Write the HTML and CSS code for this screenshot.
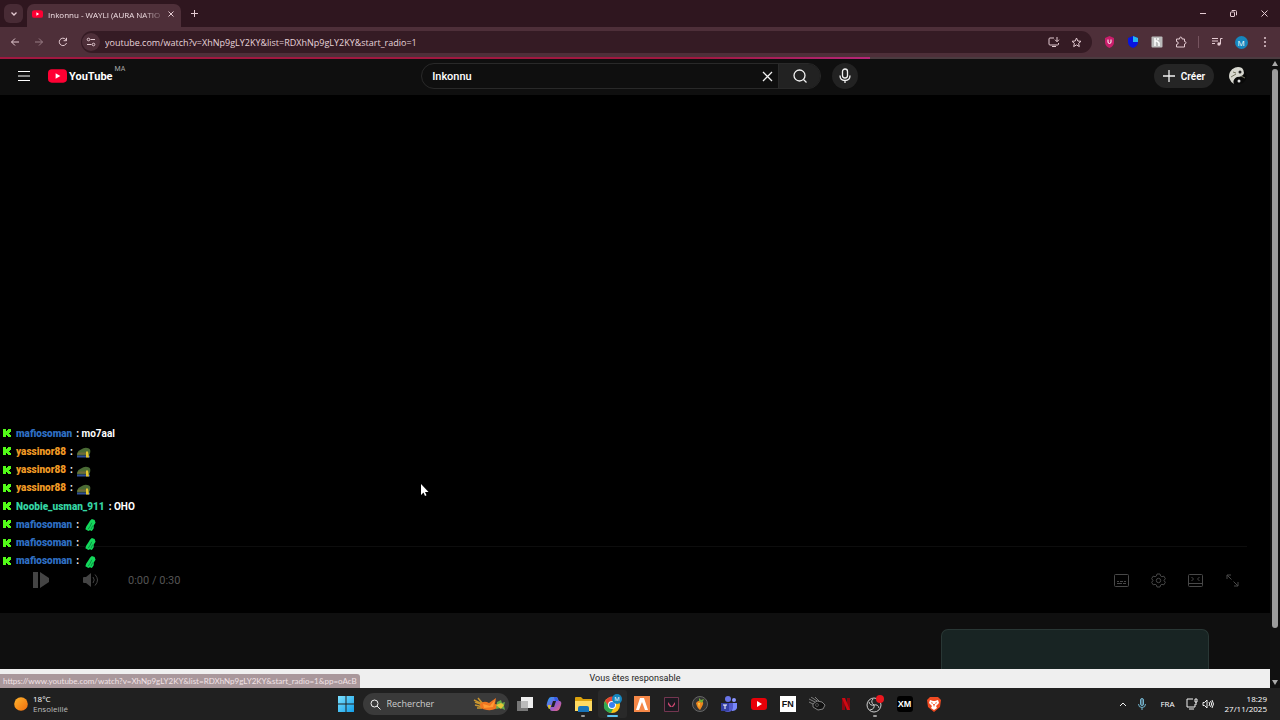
FILE: index.html
```html
<!DOCTYPE html>
<html lang="fr">
<head>
    <meta charset="UTF-8">
    <meta name="viewport" content="width=device-width, initial-scale=1.0">
    <title>Inkonnu - WAYLI (AURA NATION)</title>
    <link rel="stylesheet" href="styles.css">
</head>
<body>
    <!-- Shared icons -->
    <svg class="sprite" aria-hidden="true">
        <symbol id="kick" viewBox="0 0 8 8"><path fill="#53fc18" d="M0 0h3v2h1V1h1V0h3v3H7v1H6v1h1v1h1v2H5V7H4V6H3v2H0z"/></symbol>
        <symbol id="cap" viewBox="0 0 14 12"><path fill="#4a6b35" d="M0 7Q1 4 4 3 8 0 12 2q2 1 1 5l-1 2H0z"/><path fill="#6f6a3a" d="M1 6h8v2H1z"/><path fill="#2f4f96" d="M0 9h13v2H0z"/><path fill="#e5c52f" d="M9 5h2l1 6H9z"/></symbol>
        <symbol id="frog" viewBox="0 0 12 14"><path fill="#14d95c" d="M6 2l2-2 3 1 1 3-2 3v3l-2 3-2-1-2 1-1-1-2-1 1-3 2-3z"/><path stroke="#0a8a42" fill="none" d="M8 4L6 8l-2 3M9 7l-2 4"/></symbol>
        <symbol id="yt" viewBox="0 0 20 14"><rect width="20" height="14" rx="4" fill="#f03"/><path fill="#fff" d="M8 4l5 3-5 3z"/></symbol>
    </svg>

    <!-- Browser tabs -->
    <header class="tabstrip">
        <button class="tab-search" aria-label="Rechercher dans les onglets"><svg width="8" height="8" viewBox="0 0 8 8"><path class="line" stroke-width="1.300" d="M1.500 2.500L4 5l2.500-2.500"/></svg></button>
        <div class="tab">
            <svg width="11" height="8"><use href="#yt"/></svg>
            <span class="tab-title">Inkonnu - WAYLI (AURA NATIO</span>
            <button class="tab-close" aria-label="Fermer l'onglet"><svg width="8" height="8" viewBox="0 0 8 8"><path class="line" d="M1.500 1.500l5 5m0-5l-5 5"/></svg></button>
        </div>
        <button class="new-tab" aria-label="Nouvel onglet"><svg width="9" height="9" viewBox="0 0 9 9"><path class="line" d="M4.500 1v7M1 4.500h7"/></svg></button>
        <div class="window-buttons">
            <button aria-label="Réduire"><svg width="8" height="8" viewBox="0 0 8 8"><path class="line" d="M1 3.500h6"/></svg></button>
            <button aria-label="Restaurer"><svg width="9" height="9" viewBox="0 0 9 9"><path class="line" d="M3 2V1.500h3.500q1 0 1 1V6H7M1.500 3.500q0-.5.5-.5h3q.5 0 .5.5v3.500q0 .5-.5.500H2q-.5 0-.5-.5z"/></svg></button>
            <button aria-label="Fermer"><svg width="9" height="9" viewBox="0 0 9 9"><path class="line" d="M1.500 1.500l6 6m0-6l-6 6"/></svg></button>
        </div>
    </header>

    <nav class="toolbar">
        <div class="tool-group">
            <button aria-label="Retour"><svg width="10" height="10" viewBox="0 0 10 10"><path class="line" d="M9 5H1.500M5 1.500L1.500 5 5 8.500"/></svg></button>
            <button class="dim" aria-label="Avancer"><svg width="10" height="10" viewBox="0 0 10 10"><path class="line" d="M1 5h7.500M5 1.500L8.500 5 5 8.500"/></svg></button>
            <button aria-label="Actualiser"><svg width="10" height="10" viewBox="0 0 10 10"><path class="line" d="M8.500 6A3.700 3.700 0 1 1 7.600 2.300L8.500 3.500M8.500.8v2.900H5.600"/></svg></button>
        </div>
        <div class="omnibox">
            <button class="site-info" aria-label="Informations sur le site"><svg width="10" height="10" viewBox="0 0 10 10"><path class="line" d="M4.500 2.500H9M1 7.500h4.500"/><circle class="line" cx="2.500" cy="2.500" r="1.300"/><circle class="line" cx="7.500" cy="7.500" r="1.300"/></svg></button>
            <input class="url" type="text" aria-label="Adresse" value="youtube.com/watch?v=XhNp9gLY2KY&amp;list=RDXhNp9gLY2KY&amp;start_radio=1">
            <button aria-label="Installer"><svg width="12" height="12" viewBox="0 0 12 12"><path class="line" d="M6 2H2q-1 0-1 1v5q0 1 1 1h7.500q1 0 1-1V7M4 10.500h4M9 1v4.500M7 3.700l2 2 2-2"/></svg></button>
            <button aria-label="Ajouter aux favoris"><svg width="11" height="11" viewBox="0 0 11 11"><path class="line" d="M5.500 1l1.300 3 3.200.3-2.400 2.100.7 3.200-2.800-1.700-2.800 1.700.7-3.200L1 4.300 4.200 4z"/></svg></button>
        </div>
        <div class="tool-group">
            <button aria-label="uBlock"><svg width="11" height="12" viewBox="0 0 11 12"><path fill="#c91e6b" d="M5.500 0L10 2v4q0 4-4.500 6Q1 10 1 6V2z"/><path stroke="#fff" fill="none" d="M4 3.500V6q0 1.500 1.500 1.500T7 6V3.500"/></svg></button>
            <button aria-label="Protection"><svg width="12" height="12" viewBox="0 0 12 12"><path fill="#0715df" d="M1 2l5-2 5 2v4q0 4-5 6-5-2-5-6z"/><path fill="#24b5f0" d="M6 0l5 2v4H6z"/></svg></button>
            <button aria-label="Extension"><svg width="12" height="12" viewBox="0 0 12 12"><rect width="11" height="11" x=".5" y=".5" fill="#bbb" rx="1"/><path stroke="#fff" fill="none" stroke-width="1.500" d="M4 2v8M8 10V7L6 5H4M7 2v2"/></svg></button>
            <button aria-label="Extensions"><svg width="12" height="12" viewBox="0 0 12 12"><path class="line" d="M1.500 3h3q0-2 1.300-2t1.300 2h2.400v2.500q1.500 0 1.500 1.200T9.500 8v3h-8V8.500q1.700 0 1.700-1.500T1.500 5.500z"/></svg></button>
            <span class="separator"></span>
            <button aria-label="Médias"><svg width="12" height="10" viewBox="0 0 12 10"><path class="line" d="M1 1.500h6M1 4h6M1 6.500h3M11.500 1.500H9.500v5.500"/><circle cx="8" cy="7" r="1.700" fill="#e4cbd2"/></svg></button>
            <button aria-label="Profil"><span class="profile">M</span></button>
            <button aria-label="Menu"><svg width="4" height="12" viewBox="0 0 4 12"><g fill="#e4cbd2"><circle cx="2" cy="2" r="1"/><circle cx="2" cy="6" r="1"/><circle cx="2" cy="10" r="1"/></g></svg></button>
        </div>
    </nav>
    <div class="loading"><div class="loading-bar"></div></div>

    <!-- Web page -->
    <div class="viewport">
        <main class="page">
            <div class="masthead">
                <div class="brand">
                    <button aria-label="Guide"><svg width="12" height="12" viewBox="0 0 12 12"><path stroke="#fff" d="M0 1.500h12M0 6h12M0 10.500h12"/></svg></button>
                    <a class="logo" href="#"><svg width="19" height="14"><use href="#yt"/></svg><span>YouTube</span><sup>MA</sup></a>
                </div>
                <form class="search">
                    <div class="search-box">
                        <input type="text" aria-label="Rechercher" value="Inkonnu">
                        <button type="button" class="clear" aria-label="Effacer"><svg width="11" height="11" viewBox="0 0 11 11"><path class="white-line" d="M1 1l9 9m0-9l-9 9"/></svg></button>
                        <button type="button" class="search-submit" aria-label="Lancer la recherche"><svg width="14" height="14" viewBox="0 0 14 14"><circle class="white-line" cx="6.500" cy="6.500" r="5.500"/><path class="white-line" d="M10.500 10.500L13.500 13.500"/></svg></button>
                    </div>
                    <button type="button" class="mic" aria-label="Recherche vocale"><svg width="12" height="16" viewBox="0 0 12 16"><rect class="white-line" x="3.500" y="1" width="5" height="9" rx="2.500"/><path class="white-line" d="M1 7.500q0 5 5 5t5-5M6 12.500V15"/></svg></button>
                </form>
                <div class="account">
                    <button class="create"><svg width="12" height="12" viewBox="0 0 12 12"><path class="white-line" d="M6 0v12M0 6h12"/></svg>Créer</button>
                    <button aria-label="Compte"><svg width="18" height="18" viewBox="0 0 18 18"><circle cx="9" cy="9" r="8.500" fill="#090909"/><path fill="#d8d8d0" d="M13 1A8.500 8.500 0 0 0 5 17q-2-4 3-7 6 0 7-4 0-3-2-5z"/><circle cx="11" cy="5" r="1.500" fill="#222"/><circle cx="10" cy="14" r="1.500" fill="#ddd"/><path stroke="#777762" d="M2 10l5-3M12 9l4 2M4 5l3 1"/></svg></button>
                </div>
            </div>

            <section class="player">
                <ul class="chat">
                    <li><svg class="badge"><use href="#kick"/></svg><b class="blue">mafiosoman</b><span>: mo7aal</span></li>
                    <li><svg class="badge"><use href="#kick"/></svg><b class="orange">yassinor88</b><span>:</span><svg class="emote"><use href="#cap"/></svg></li>
                    <li><svg class="badge"><use href="#kick"/></svg><b class="orange">yassinor88</b><span>:</span><svg class="emote"><use href="#cap"/></svg></li>
                    <li><svg class="badge"><use href="#kick"/></svg><b class="orange">yassinor88</b><span>:</span><svg class="emote"><use href="#cap"/></svg></li>
                    <li><svg class="badge"><use href="#kick"/></svg><b class="green">Noobie_usman_911</b><span>: OHO</span></li>
                    <li><svg class="badge"><use href="#kick"/></svg><b class="blue">mafiosoman</b><span>:</span><svg class="emote"><use href="#frog"/></svg></li>
                    <li><svg class="badge"><use href="#kick"/></svg><b class="blue">mafiosoman</b><span>:</span><svg class="emote"><use href="#frog"/></svg></li>
                    <li><svg class="badge"><use href="#kick"/></svg><b class="blue">mafiosoman</b><span>:</span><svg class="emote"><use href="#frog"/></svg></li>
                </ul>
                <svg class="pointer" width="9" height="14" viewBox="0 0 9 14"><path fill="#fff" d="M1 1v11l2.500-2.500L5 13l1.500-.7L5 9h3.500z"/></svg>
                <div class="player-bar"></div>
                <div class="controls">
                    <button class="wide" aria-label="Lecture"><svg width="16" height="16" viewBox="0 0 16 16"><path fill="#444" d="M0 0h5v16H0zM7 0l9 6v4l-9 6z"/></svg></button>
                    <button class="wide" aria-label="Volume"><svg width="16" height="14" viewBox="0 0 16 14"><path fill="#444" d="M0 5q0-1 1-1h2l5-4v14l-5-4H1q-1 0-1-1z"/><path stroke="#444" fill="none" d="M10 4q2.500 3 0 6M12 1.500q5 5.500 0 11"/></svg></button>
                    <span class="time">0:00 / 0:30</span>
                    <button aria-label="Sous-titres"><svg class="gray" width="15" height="13" viewBox="0 0 15 13"><rect x=".5" y=".5" width="14" height="12" rx="1"/><path d="M3 7.500h2m1 0h3m1 0h2M3 9.500h5m1 0h3"/></svg></button>
                    <button aria-label="Paramètres"><svg class="gray" width="15" height="15" viewBox="0 0 15 15"><path d="M6 1h3l.6 2 1.300.7 2-.5 1.400 2.500L13 7.500l1.300 1.800-1.400 2.500-2-.5-1.300.7L9 14H6l-.6-2-1.300-.7-2 .5L.7 9.300 2 7.500.7 5.700l1.400-2.500 2 .5L5.400 3z"/><circle cx="7.500" cy="7.500" r="2.200"/></svg></button>
                    <button aria-label="Mode cinéma"><svg class="gray" width="15" height="13" viewBox="0 0 15 13"><rect x=".5" y=".5" width="14" height="12" rx="1"/><path d="M1 9.500h13M3.500 3l2 2-2 2M11.500 3l-2 2 2 2"/></svg></button>
                    <button aria-label="Plein écran"><svg class="gray" width="13" height="13" viewBox="0 0 13 13"><path d="M1 5V1h4M1 1l4.500 4.500M12 8v4H8M12 12L7.500 7.500"/></svg></button>
                </div>
            </section>

            <section class="below"><div class="card"></div></section>
            <p class="notice">Vous êtes responsable</p>
        </main>
        <div class="scrollbar">
            <svg width="6" height="5" viewBox="0 0 6 5"><path fill="#aaa" d="M0 5l3-5 3 5z"/></svg>
            <div class="track"><div class="thumb"></div></div>
            <svg width="6" height="5" viewBox="0 0 6 5"><path fill="#aaa" d="M0 0h6L3 5z"/></svg>
        </div>
        <div class="link-status">https://www.youtube.com/watch?v=XhNp9gLY2KY&amp;list=RDXhNp9gLY2KY&amp;start_radio=1&amp;pp=oAcB</div>
    </div>

    <!-- Windows taskbar -->
    <footer class="taskbar">
        <div class="weather">
            <svg width="14" height="14" viewBox="0 0 14 14"><defs><linearGradient id="sun" x2="1" y2="1"><stop stop-color="#ffb52e"/><stop offset="1" stop-color="#ef6c0c"/></linearGradient></defs><circle cx="7" cy="7" r="6.800" fill="url(#sun)"/></svg>
            <div>18°C<br><span>Ensoleillé</span></div>
        </div>
        <div class="apps">
            <button aria-label="Démarrer"><svg width="16" height="16" viewBox="0 0 16 16"><defs><linearGradient id="win" x2="1" y2="1"><stop stop-color="#7ce1ff"/><stop offset="1" stop-color="#139fe9"/></linearGradient></defs><path fill="url(#win)" d="M0 0h7.500v7.500H0zM8.500 0H16v7.500H8.500zM0 8.500h7.500V16H0zM8.500 8.500H16V16H8.500z"/></svg></button>
            <label class="task-search">
                <svg width="11" height="11" viewBox="0 0 11 11"><circle class="white-line" cx="4.500" cy="4.500" r="3.500"/><path class="white-line" d="M7 7l3.500 3.500"/></svg>
                <input type="text" placeholder="Rechercher" aria-label="Rechercher sur le PC">
                <svg width="34" height="16" viewBox="0 0 34 16"><path stroke="#c9962f" stroke-width="1.500" fill="none" d="M1 4l8 4M2 9l8 2M5 2l5 6M2 6l8 3M4 12l5 0"/><path fill="#ef7621" d="M7 8q4-4 9-1l7-5-1 6 5 1q-4 6-13 5Q6 13 7 8z"/><path fill="#ff9c36" d="M10 8l7 2 5-6-2 7-9 1z"/><path fill="#67a84a" d="M24 6l4-2 1 3 3-1-1 4 1 4-4-2-5 1z"/><path fill="#e4c736" d="M23 9l5-2 3 2-3 4z"/></svg>
            </label>
            <div class="app-list">
                <button aria-label="Vue des tâches"><svg width="16" height="14" viewBox="0 0 16 14"><path fill="#777" d="M0 4h11v10H0z"/><path fill="#eee" d="M4 0h12v11H4z"/><path fill="#bbb" d="M4 4h7v7H4z"/></svg></button>
                <button aria-label="Copilot"><svg width="16" height="16" viewBox="0 0 16 16"><defs><linearGradient id="cp" x2="1" y2="1"><stop stop-color="#18a9f4"/><stop offset=".5" stop-color="#865bdc"/><stop offset="1" stop-color="#f3656f"/></linearGradient></defs><path fill="url(#cp)" d="M5 1h5q2 0 2 2l1 2h1q2 1 1 4l-1 3q-1 3-3 3H6q-2 0-2-2l-1-2H2Q0 10 1 7l1-3q1-3 3-3z"/><path fill="#202020" d="M7 5h3l-2 6H5z"/><path fill="#d3c03a" d="M2 9h3l-1 4q-2 0-2-2z"/><path fill="#315ee8" d="M9 1q3 0 3 4H9L8 1z"/></svg></button>
                <button class="running" aria-label="Explorateur"><svg width="17" height="15" viewBox="0 0 17 15"><path fill="#dca20d" d="M0 1q0-1 1-1h5l2 2h9v12H0z"/><path fill="#ffda61" d="M0 4h17v10H0z"/><path fill="#1875ba" d="M3 15v-4q0-2 2-2h7q2 0 2 2v4z"/></svg></button>
                <button class="running active" aria-label="Chrome"><svg width="22" height="22" viewBox="0 0 22 22"><circle cx="10" cy="12" r="8" fill="#fbc116"/><path fill="#e54335" d="M3 8q7-9 14 0h-7L7 14z"/><path fill="#30a852" d="M3 8l4 6 4 2-2 4Q-1 18 3 8z"/><circle cx="10" cy="12" r="4" fill="#fff"/><circle cx="10" cy="12" r="3" fill="#397ff1"/><circle cx="15" cy="6" r="5" fill="#1686bd"/><text x="15" y="8" text-anchor="middle" font-size="6" fill="#fff">M</text></svg></button>
                <button aria-label="FiveM"><svg width="16" height="16" viewBox="0 0 16 16"><path fill="#f58747" d="M0 0h16v16H0z"/><path fill="#fff" d="M6 2h4l4 12h-3L8 6l-3 8H2z"/></svg></button>
                <button aria-label="Valorant"><svg width="15" height="15" viewBox="0 0 15 15"><path fill="#1b1920" stroke="#743650" d="M.5.5h14v14H.5z"/><path fill="#c9476f" d="M4 5l4 5H6L4 7.500zM11 5v2.500L9 10H7.500z"/></svg></button>
                <button aria-label="FL Studio"><svg width="16" height="16" viewBox="0 0 16 16"><circle cx="8" cy="8" r="7.500" fill="#343434" stroke="#666"/><path fill="#ef871e" d="M4 7q3-4 7-1 1 2-3 8-3-2-4-7z"/><path fill="#fac748" d="M6 7h2l-1 5z"/><path fill="#70ad37" d="M7 5l0-3 2 2 3-1-2 4z"/></svg></button>
                <button aria-label="Teams"><svg width="16" height="16" viewBox="0 0 16 16"><circle cx="7" cy="3" r="3" fill="#6974e8"/><circle cx="13" cy="4" r="2" fill="#8c96ff"/><path fill="#7887fa" d="M9 7h7v5q-1 3-5 3z"/><path fill="#535acb" d="M2 7h10v5q-1 4-5 4-5 0-5-5z"/><path fill="#3540a5" d="M0 7h8v8H0z"/><path stroke="#fff" d="M2 9h4M4 9v4"/></svg></button>
                <button aria-label="YouTube"><svg width="16" height="12" viewBox="0 0 16 12"><rect width="16" height="12" rx="3" fill="#e90008"/><path fill="#fff" d="M6 3l5 3-5 3z"/></svg></button>
                <button aria-label="Fortnite"><span class="app-letters fn">FN</span></button>
                <button aria-label="Météore"><svg width="17" height="14" viewBox="0 0 17 14"><path fill="#111" stroke="#aaa" stroke-width=".7" d="M4 7l4-3 5 1 3 3-2 4-5 1-5-3zM0 2l6 3M2 0l6 4M0 5l4 2M6 0l4 4"/><circle cx="8" cy="8" r="1.500" fill="none" stroke="#777" stroke-width=".6"/></svg></button>
                <button aria-label="Netflix"><svg width="8" height="12" viewBox="0 0 8 12"><path fill="#8a0610" d="M0 0h3v12H0zM5 0h3v12H5z"/><path fill="#d00913" d="M0 0h3l5 12H5z"/></svg></button>
                <button class="running" aria-label="OBS"><svg width="20" height="18" viewBox="0 0 20 18"><circle cx="9" cy="10" r="7" fill="#242424" stroke="#ccc"/><path stroke="#ccc" fill="none" d="M8 4q-3 3 1 6 4-1 5 3M9 10q1 4-4 5M4 7q1 4 5 3"/><circle cx="15" cy="4" r="4" fill="#ec171e"/></svg></button>
                <button aria-label="XM"><span class="app-letters xm">XM</span></button>
                <button aria-label="Brave"><svg width="14" height="16" viewBox="0 0 14 16"><path fill="#f14b22" d="M3 1h8l3 3-1 7-6 5-6-5-1-7z"/><path fill="#fff" d="M3 4l3 1h2l3-1 1 3-3 3 1 2-3 2-3-2 1-2-3-3z"/><path fill="#f14b22" d="M4 6l2 1-1 1zM10 6L8 7l1 1zM6 8h2l-1 3z"/></svg></button>
            </div>
        </div>
        <div class="tray">
            <svg width="8" height="6" viewBox="0 0 8 6"><path class="white-line" d="M1 5l3-3 3 3"/></svg>
            <svg width="8" height="12" viewBox="0 0 8 12"><rect x="2.500" y=".5" width="3" height="7" rx="1.500" fill="#506a78" stroke="#72b5cf"/><path stroke="#72b5cf" fill="none" d="M.5 6q0 3.500 3.500 3.500T7.500 6M4 9.500V12"/></svg>
            <span class="lang">FRA</span>
            <div class="quick">
                <svg width="12" height="12" viewBox="0 0 12 12"><path class="white-line" d="M7 1H1v8h8V6M3 11h5M9 1h2v3H9zM10 4v3"/></svg>
                <svg width="12" height="10" viewBox="0 0 12 10"><path class="white-line" d="M1 3.500h1.500L5 1v8L2.500 6.500H1zM7 3q1.500 2 0 4M8.500 2q2.500 3 0 6M10 1q3 4 0 8"/></svg>
            </div>
            <div class="clock">18:29<br>27/11/2025</div>
        </div>
    </footer>
</body>
</html>
```
FILE: styles.css
```css
* {
    box-sizing: border-box;
}
body {
    display: flex;
    flex-direction: column;
    height: 100vh;
    margin: 0;
    overflow: hidden;
    background: #0f0f0f;
    color: #fff;
    font-family: "Open Sans", sans-serif;
    font-size: 9px;
}
button {
    display: flex;
    align-items: center;
    justify-content: center;
    padding: 0;
    border: none;
    background: none;
    color: inherit;
    font: inherit;
}
input {
    min-width: 0;
    padding: 0;
    border: none;
    outline: none;
    background: none;
    color: inherit;
    font: inherit;
}
svg {
    flex: none;
}
.sprite {
    position: absolute;
    width: 0;
    height: 0;
}
.line {
    fill: none;
    stroke: #e4cbd2;
}
.white-line {
    fill: none;
    stroke: #f1f1f1;
}

/* Browser */
.tabstrip {
    display: flex;
    height: 27px;
    padding: 4px 0 0 4px;
    background: #2f161f;
}
.tab-search {
    width: 19px;
    height: 19px;
    margin-right: 4px;
    border-radius: 6px;
    background: #482b35;
}
.tab {
    display: flex;
    align-items: center;
    width: 154px;
    padding: 0 6px 3px 5px;
    border-radius: 7px 7px 0 0;
    background: #4e2f39;
    color: #f1dfe4;
}
.tab-title {
    flex: 1;
    margin-left: 5px;
    font-size: 8px;
    white-space: nowrap;
    mask-image: linear-gradient(90deg, #000 80%, transparent);
}
.new-tab {
    width: 26px;
    height: 19px;
}
.window-buttons {
    display: flex;
    height: 19px;
    margin-left: auto;
}
.window-buttons button {
    width: 31px;
}
.toolbar {
    display: flex;
    align-items: center;
    height: 30px;
    padding: 0 3px;
    background: #4e2f39;
}
.tool-group {
    display: flex;
    align-items: center;
}
.tool-group button {
    width: 24px;
    height: 24px;
}
.dim {
    opacity: 0.5;
}
.omnibox {
    display: flex;
    flex: 1;
    align-items: center;
    height: 22px;
    margin: 0 5px 0 6px;
    padding: 0 5px 0 1px;
    border-radius: 11px;
    background: #351b24;
    color: #e7d3da;
}
.omnibox button {
    width: 22px;
}
.omnibox .site-info {
    width: 18px;
    height: 18px;
    border-radius: 9px;
    background: #4e2f39;
}
.url {
    flex: 1;
    margin-left: 5px;
}
.separator {
    width: 1px;
    height: 12px;
    margin: 0 6px 0 5px;
    background: #76545f;
}
.profile {
    width: 13px;
    height: 13px;
    border-radius: 50%;
    background: #1686bd;
    font-size: 8px;
    line-height: 13px;
}
.loading {
    height: 2px;
    background: #4b3b40;
}
.loading-bar {
    width: 68%;
    height: 2px;
    background: linear-gradient(90deg, #a01840 80%, #b52678);
}

/* Page */
.viewport {
    position: relative;
    display: flex;
    flex: 1;
    min-height: 0;
    font-family: Roboto, sans-serif;
}
.page {
    display: flex;
    flex: 1;
    flex-direction: column;
    min-width: 0;
}
.masthead {
    display: flex;
    align-items: center;
    justify-content: space-between;
    height: 36px;
    padding: 0 23px 2px 18px;
    background: #0f0f0f;
}
.masthead .white-line {
    stroke-width: 1.3;
}
.brand,
.search,
.account {
    display: flex;
    align-items: center;
}
.brand {
    gap: 18px;
}
.logo {
    display: flex;
    align-items: center;
    gap: 2px;
    color: #fff;
    font-size: 11px;
    font-weight: bold;
    text-decoration: none;
}
.logo sup {
    align-self: flex-start;
    margin-top: -4px;
    color: #aaa;
    font-size: 7px;
    font-weight: normal;
}
.search {
    flex: 0 1 437px;
    gap: 11px;
}
.search-box {
    display: flex;
    flex: 1;
    height: 26px;
    overflow: hidden;
    border: 1px solid #292929;
    border-radius: 13px;
}
.search-box input {
    flex: 1;
    padding-left: 10px;
    font-size: 11px;
    font-weight: 500;
}
.clear {
    width: 21px;
}
.search-submit {
    width: 42px;
    border-left: 1px solid #292929;
    background: #222;
}
.mic {
    width: 26px;
    height: 26px;
    border-radius: 50%;
    background: #222;
}
.account {
    gap: 15px;
}
.create {
    gap: 6px;
    width: 60px;
    height: 24px;
    border-radius: 12px;
    background: #252525;
    font-size: 10px;
    font-weight: 600;
}
.player {
    position: relative;
    display: flex;
    flex: 1;
    flex-direction: column;
    justify-content: flex-end;
    background: #000;
}
.chat {
    position: absolute;
    bottom: 43px;
    left: 3px;
    display: grid;
    grid-template-rows: repeat(8, 1fr);
    height: 146px;
    margin: 0;
    padding: 0;
    font-size: 10px;
    font-weight: bold;
    list-style: none;
}
.chat li {
    display: flex;
    align-items: center;
    gap: 4px;
}
.badge {
    width: 8px;
    height: 8px;
    margin-right: 1px;
}
.emote {
    width: 14px;
    height: 13px;
    margin-top: 3px;
}
.blue {
    color: #2f6fc4;
}
.orange {
    color: #f09a25;
}
.green {
    color: #35d6a4;
}
.pointer {
    position: absolute;
    bottom: 116px;
    left: 420px;
}
.player-bar {
    height: 1px;
    margin: 0 23px 0 28px;
    background: #0d0d0d;
}
.controls {
    display: flex;
    align-items: center;
    height: 66px;
    padding: 0 19px 0 16px;
    color: #555;
    font-size: 11px;
}
.controls button {
    width: 37px;
    height: 37px;
}
.controls .wide {
    width: 50px;
}
.time {
    flex: 1;
    padding-left: 12px;
}
.gray {
    fill: none;
    stroke: #484848;
}
.below {
    display: flex;
    justify-content: flex-end;
    height: 56px;
    padding: 16px 61px 0 0;
    background: #0f0f0f;
}
.card {
    width: 268px;
    border: 1px solid #293735;
    border-bottom: none;
    border-radius: 7px 7px 0 0;
    background: #182423;
}
.notice {
    height: 19px;
    margin: 0;
    background: #efefef;
    color: #222;
    font-size: 9px;
    line-height: 18px;
    text-align: center;
}
.scrollbar {
    display: flex;
    flex-direction: column;
    align-items: center;
    gap: 3px;
    width: 10px;
    padding: 2px 0 3px;
    background: #111;
}
.track {
    flex: 1;
}
.thumb {
    width: 6px;
    height: 92%;
    border-radius: 3px;
    background: #9c9c9c;
}
.link-status {
    position: absolute;
    bottom: 0;
    left: 0;
    height: 14px;
    padding: 0 3px;
    border-radius: 0 3px 0 0;
    background: #a9979b;
    color: #f2e2e6;
    font: 8px/14px Lato, sans-serif;
}

/* Taskbar */
.taskbar {
    display: grid;
    grid-template-columns: 1fr auto 1fr;
    align-items: center;
    height: 32px;
    background: #202020;
    font-size: 8px;
    line-height: 10px;
}
.weather {
    display: flex;
    align-items: center;
    gap: 5px;
    padding-left: 14px;
}
.weather span {
    color: #bbb;
}
.apps {
    display: flex;
    align-items: center;
    gap: 2px;
}
.apps button {
    position: relative;
    width: 29px;
    height: 28px;
}
.task-search {
    display: flex;
    align-items: center;
    gap: 6px;
    width: 146px;
    height: 22px;
    padding: 0 2px 0 7px;
    border-radius: 11px;
    background: #3a3a3a;
}
.task-search input {
    flex: 1;
    font-size: 9px;
}
.task-search input::placeholder {
    color: #ccc;
}
.app-list {
    display: grid;
    grid-template-columns: repeat(15, 1fr);
    width: 438px;
}
.apps .active {
    border-radius: 3px;
    background: #292929;
}
.running::after {
    position: absolute;
    bottom: 1px;
    width: 4px;
    height: 2px;
    border-radius: 1px;
    background: #999;
    content: "";
}
.active::after {
    width: 11px;
    background: #5cc4f2;
}
.app-letters {
    width: 16px;
    height: 16px;
    font: bold 9px/16px "Liberation Sans", sans-serif;
}
.fn {
    background: #fff;
    color: #111;
}
.xm {
    border-radius: 3px;
    background: #000;
}
.tray {
    display: flex;
    align-items: center;
    justify-content: flex-end;
    gap: 11px;
    padding-right: 13px;
}
.lang {
    margin-left: 3px;
}
.quick {
    display: flex;
    align-items: center;
    gap: 4px;
}
.clock {
    text-align: right;
}
```
